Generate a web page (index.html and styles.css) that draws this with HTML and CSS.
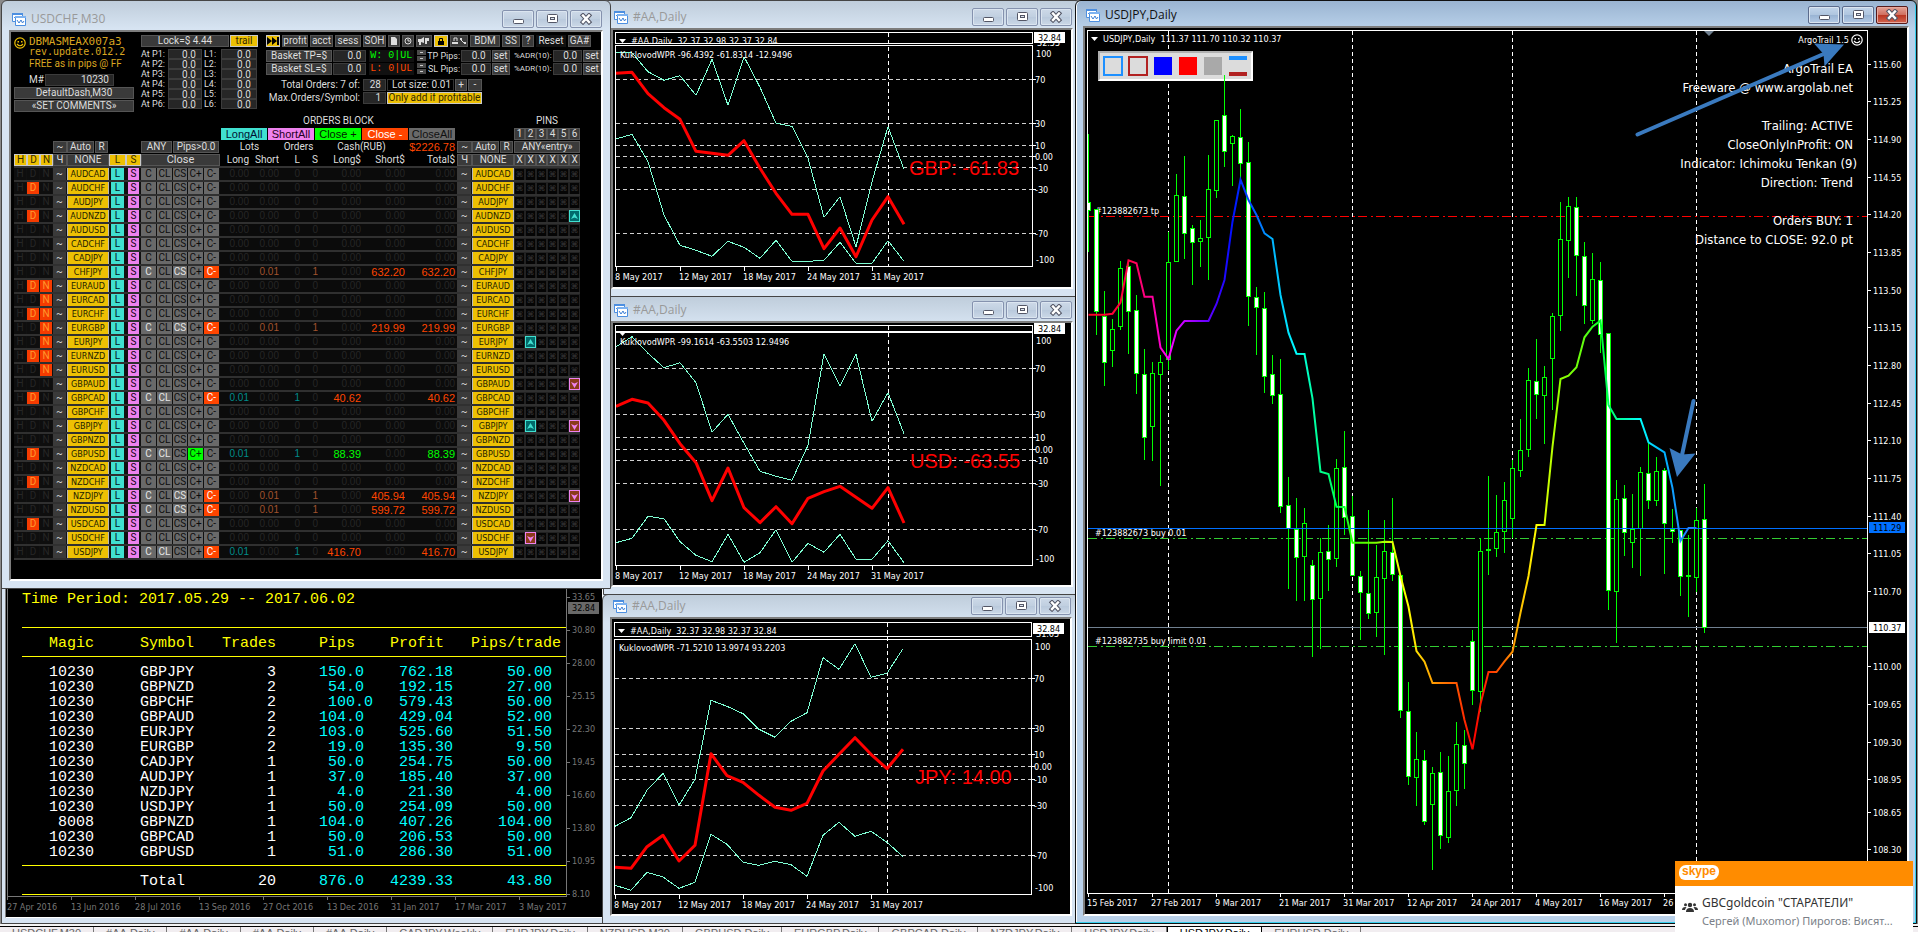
FILE: index.html
```html
<!DOCTYPE html>
<html lang="en">
<head>
<meta charset="utf-8">
<title>USDJPY,Daily</title>
<link rel="stylesheet" href="styles.css">
</head>
<body>
<svg class="defs" aria-hidden="true">
  <symbol id="chart-icon" viewBox="0 0 14 14">
    <path d="M.5 1.5h10v8h-10z" fill="#fff" stroke="#4d8fe0"/>
    <path d="M0 1h11v2H0z" fill="#4d8fe0"/>
    <path d="M2 6l2-2 1 2 2-2" fill="none" stroke="#4d8fe0"/>
    <path d="M3.5 4.500h10v9h-10z" fill="#fff" stroke="#4d8fe0"/>
    <path d="M3 4h11v2H3z" fill="#7db2f0"/>
    <path d="M5 8l2 3 2-3 1.500 3 1.500-2" fill="none" stroke="#3c7fd6"/>
  </symbol>
  <symbol id="min-icon" viewBox="0 0 14 12"><rect x="2.500" y="6.500" width="10" height="4" rx="1" fill="#fff" stroke="#535666"/></symbol>
  <symbol id="max-icon" viewBox="0 0 14 12"><rect x="2.500" y="1.500" width="10" height="8" rx="1" fill="#fff" stroke="#535666"/><rect x="5.500" y="4.500" width="4" height="2" fill="#dfe6f0" stroke="#535666"/></symbol>
  <symbol id="close-icon" viewBox="0 0 14 12"><path d="M4 2.500l6 6.500M10 2.500L4 9" stroke="#535666" stroke-width="4.500" stroke-linecap="square"/><path d="M4 2.500l6 6.500M10 2.500L4 9" stroke="#fff" stroke-width="2.400" stroke-linecap="square"/></symbol>
  <symbol id="smile-icon" viewBox="0 0 12 12"><circle cx="6" cy="6" r="5.200" fill="none" stroke="currentColor" stroke-width="1.200"/><path d="M3.500 4h1.500v1.500H3.500zM7 4h1.500v1.500H7z" fill="currentColor"/><path d="M3 7q3 3.500 6 0" fill="none" stroke="currentColor" stroke-width="1.200"/></symbol>
</svg>

<main class="desktop">

  <section class="window report-window" aria-label="Trade report">
    <div class="client report">
      <div class="report-plot">
        <p class="report-title">Time Period: 2017.05.29 -- 2017.06.02</p>
        <table class="report-table">
          <colgroup><col class="r1"><col class="r2"><col class="r3"><col class="r4"><col class="r5"><col class="r6"></colgroup>
          <thead><tr><th>Magic</th><th>Symbol</th><th>Trades</th><th>Pips</th><th>Profit</th><th>Pips/trade</th></tr></thead>
          <tbody id="report-rows"></tbody>
          <tfoot><tr><td></td><td>Total</td><td>20</td><td>876.0</td><td>4239.33</td><td>43.80</td></tr></tfoot>
        </table>
      </div>
      <div class="report-axis" id="report-axis"></div>
      <div class="report-dates" id="report-dates"></div>
    </div>
  </section>

  <section class="window jpy-window" aria-label="#AA,Daily JPY">
    <header class="titlebar"></header>
    <div class="client"><svg id="chart-jpy"></svg></div>
  </section>

  <section class="window usd-window" aria-label="#AA,Daily USD">
    <header class="titlebar"></header>
    <div class="client"><svg id="chart-usd"></svg></div>
  </section>

  <section class="window gbp-window" aria-label="#AA,Daily GBP">
    <header class="titlebar"></header>
    <div class="client"><svg id="chart-gbp"></svg></div>
  </section>

  <section class="window dash-window" aria-label="USDCHF,M30">
    <header class="titlebar"></header>
    <div class="client dash">
      <div class="dash-top">
        <div class="ident">
          <div class="ident-name">
            <svg class="smile"><use href="#smile-icon"/></svg>
            <div><p class="name-line">DBMASMEAX007a3</p><p class="rev-line">rev.update.012.2</p><p class="free-line">FREE as in pips @ FF</p></div>
          </div>
          <div class="magic"><label for="magic">M#</label><input id="magic" value="10230"></div>
          <button class="btn wide">DefaultDash,M30</button>
          <button class="btn wide">«SET COMMENTS»</button>
        </div>
        <div class="locks">
          <div class="lock-head"><button class="btn lock-btn">Lock=$ 4.44</button><button class="btn gold trail">trail</button></div>
          <div class="lock-grid" id="locks"></div>
        </div>
        <div class="tools">
          <div class="tool-row">
            <button class="btn gold w14" aria-label="Next"><svg width="12" height="8"><path d="M0 0l5 4-5 4zM5 0l5 4-5 4zM10 0h2v8h-2z" fill="#000"/></svg></button>
            <button class="btn w26">profit</button><button class="btn w23">acct</button><button class="btn w26">sess</button><button class="btn w23">SOH</button>
            <button class="btn w12" aria-label="Page"><svg width="6" height="8"><path d="M0 0h4l2 2v6H0z" fill="#ddd"/></svg></button>
            <button class="btn w12" aria-label="Clock"><svg width="8" height="8"><circle cx="4" cy="4" r="3" fill="none" stroke="#ddd"/><path d="M4 2v2h2" fill="none" stroke="#ddd"/></svg></button>
            <button class="btn w16" aria-label="Sound"><svg width="12" height="8"><path d="M0 2h3l3-2v6L3 5v3H1V5H0zM7 1h4v3H9v3H7z" fill="#ddd"/></svg></button>
            <button class="btn gold w14" aria-label="Lock"><svg width="8" height="8"><path d="M2.500 4V1.500h3V4" fill="none" stroke="#000"/><path d="M1 4h6v4H1z"/></svg></button>
            <button class="btn w18" aria-label="Lock percent"><svg width="14" height="8"><path d="M2 4V1h3v3" fill="none" stroke="#ddd"/><path d="M0 5h6v2H0zM8 1h2v2H8zM12 5h2v2h-2z" fill="#ddd"/><path d="M8 2l5 5" stroke="#ddd"/></svg></button>
            <button class="btn w30">BDM</button><button class="btn w18">SS</button><button class="btn w12">?</button><button class="btn reset w30">Reset</button><button class="btn w23">GA#</button>
          </div>
          <div class="basket-row">
            <button class="btn basket">Basket TP=$</button><input class="w34" aria-label="Basket TP" value="0.0"><span class="counter win">W: 0|UL</span><span class="spin"><button aria-label="Up"></button><button aria-label="Down"></button></span>
            <label class="pips" for="tp">TP Pips:</label><input class="w30" id="tp" value="0.0"><button class="btn set">set</button>
            <label class="adr" for="tpadr">%ADR(10):</label><input class="w30" id="tpadr" value="0.0"><button class="btn set">set</button>
          </div>
          <div class="basket-row">
            <button class="btn basket">Basket SL=$</button><input class="w34" aria-label="Basket SL" value="0.0"><span class="counter loss">L: 0|UL</span><span class="spin"><button aria-label="Up"></button><button aria-label="Down"></button></span>
            <label class="pips" for="sl">SL Pips:</label><input class="w30" id="sl" value="0.0"><button class="btn set">set</button>
            <label class="adr" for="sladr">%ADR(10):</label><input class="w30" id="sladr" value="0.0"><button class="btn set">set</button>
          </div>
          <div class="order-row first">
            <label for="total">Total Orders: 7 of:</label><input class="w23" id="total" value="28"><span class="lot">Lot size: 0.01</span><button class="btn w12">+</button><button class="btn w14">-</button>
          </div>
          <div class="order-row">
            <label for="maxo">Max.Orders/Symbol:</label><input class="w23" id="maxo" value="1"><button class="btn gold only">Only add if profitable</button>
          </div>
        </div>
      </div>
      <div class="block-titles"><span class="orders-title">ORDERS BLOCK</span><span>PINS</span></div>
      <table class="dash-table">
        <colgroup id="dash-cols"></colgroup>
        <thead>
          <tr>
            <td colspan="12"></td>
            <td colspan="7"><div class="close-row"><button class="btn teal">LongAll</button><button class="btn pink">ShortAll</button><button class="btn green">Close +</button><button class="btn red">Close -</button><button class="btn grey">CloseAll</button></div></td>
            <td colspan="2"></td>
            <td><button class="btn">1</button></td><td><button class="btn">2</button></td><td><button class="btn">3</button></td><td><button class="btn">4</button></td><td><button class="btn">5</button></td><td><button class="btn">6</button></td>
          </tr>
          <tr>
            <td colspan="3"></td><td><button class="btn">~</button></td>
            <td><div class="pairhead"><button class="btn">Auto</button><button class="btn r">R</button></div></td>
            <td colspan="2"></td>
            <td colspan="5"><div class="anyrow"><button class="btn any">ANY</button><button class="btn pipsgt">Pips&gt;0.0</button></div></td>
            <th colspan="2" class="mid">Lots</th><th colspan="2" class="mid">Orders</th><th colspan="2" class="mid">Cash(RUB)</th><td class="sum">$2226.78</td>
            <td><button class="btn">~</button></td>
            <td><div class="pairhead"><button class="btn">Auto</button><button class="btn r">R</button></div></td>
            <td colspan="6"><button class="btn">ANY«entry»</button></td>
          </tr>
          <tr>
            <td><button class="btn gold">H</button></td><td><button class="btn gold">D</button></td><td><button class="btn gold">N</button></td>
            <td><button class="btn">Ч</button></td><td><button class="btn">NONE</button></td>
            <td><button class="btn gold">L</button></td><td><button class="btn gold">S</button></td>
            <td colspan="5"><button class="btn closebtn">Close</button></td>
            <th>Long</th><th>Short</th><th>L</th><th>S</th><th>Long$</th><th>Short$</th><th class="last">Total$</th>
            <td><button class="btn">Ч</button></td><td><button class="btn">NONE</button></td>
            <td><button class="btn">X</button></td><td><button class="btn">X</button></td><td><button class="btn">X</button></td><td><button class="btn">X</button></td><td><button class="btn">X</button></td><td><button class="btn">X</button></td>
          </tr>
        </thead>
        <tbody id="dash-rows"></tbody>
      </table>
    </div>
  </section>

  <section class="window main-window" aria-label="USDJPY,Daily">
    <header class="titlebar active"></header>
    <div class="client main-client">
      <div class="palette">
        <button class="sw outline-blue" aria-label="Blue frame"></button><button class="sw outline-red" aria-label="Red frame"></button><button class="sw blue" aria-label="Blue"></button><button class="sw redfill" aria-label="Red"></button><button class="sw greyfill" aria-label="Grey"></button><button class="sw bars" aria-label="Lines"></button>
      </div>
      <svg id="chart-main"></svg>
    </div>
  </section>
</main>

<nav class="tabs">
  <button>USDCHF,M30</button><button>#AA,Daily</button><button>#AA,Daily</button><button>#AA,Daily</button><button>#AA,Daily</button><button>CADJPY,Weekly</button><button>EURJPY,Daily</button><button>NZDUSD,M30</button><button>GBPUSD,Daily</button><button>EURGBP,Daily</button><button>GBPCAD,Daily</button><button>NZDJPY,Daily</button><button>USDJPY,Daily</button><button class="current">USDJPY,Daily</button><button>EURUSD,Daily</button>
</nav>

<aside class="toast">
  <div class="toast-head">
    <span class="skype">skype</span>
  </div>
  <div class="toast-body">
    <svg width="16" height="10" viewBox="0 0 16 10" fill="#333"><circle cx="8" cy="3" r="2.200"/><circle cx="3.500" cy="2.800" r="1.500"/><circle cx="12.500" cy="2.800" r="1.500"/><path d="M4 10q0-4 4-4t4 4zM0 8q0-3 3.500-3l1 .5Q3 6.500 3 8zM16 8q0-3-3.500-3l-1 .5q1.500 1 1.500 2.500z"/></svg>
    <div><p class="chat">GBCgoldcoin "СТАРАТЕЛИ"</p><p class="msg">Сергей (Muxomor) Пирогов: Висят...</p></div>
  </div>
</aside>
<script src="app.js"></script>
</body>
</html>
```

FILE: styles.css
```css
* { box-sizing: border-box; }
body {
  margin: 0;
  height: 100vh;
  overflow: hidden;
  display: flex;
  flex-direction: column;
  background: #8a8a8a;
  font-family: "DejaVu Sans Condensed", "Noto Sans", sans-serif;
  font-size: 9px;
}
p { margin: 0; }
button, input { font: inherit; color: inherit; margin: 0; padding: 0; border: 0; border-radius: 0; min-width: 0; }
.defs { position: absolute; width: 0; height: 0; }
.desktop { position: relative; flex: 1; overflow: hidden; border-bottom: 2px solid #f4f4f4; }

/* windows */
.window {
  position: absolute;
  display: flex;
  flex-direction: column;
  padding: 0 7px 7px;
  border: 1px solid #454545;
  border-radius: 6px 6px 0 0;
  background: linear-gradient(#bfcddb, #d7e4f2 28px);
}
.dash-window { left: 1px; top: 0; width: 610px; height: 589px; }
.gbp-window { left: 603px; top: 0; width: 478px; height: 297px; }
.usd-window { left: 603px; top: 296px; width: 478px; height: 299px; }
.jpy-window { left: 602px; top: 594px; width: 478px; height: 330px; }
.report-window { left: 1px; top: 560px; width: 610px; height: 364px; padding: 0 7px 5px 3px; }
.main-window {
  left: 1075px; top: 0; right: 1px; height: 924px;
  border-color: #111;
  background: linear-gradient(#9ab4d1, #b9d1ea 28px);
  box-shadow: inset -1px -1px #35d0ee, inset 1px 0 #fff;
}
.titlebar {
  display: flex;
  align-items: flex-end;
  gap: 2px;
  padding: 0 1px 2px 3px;
  font-family: "Open Sans", "Noto Sans", sans-serif;
  font-size: 12px;
  line-height: 18px;
  color: #999;
}
.titlebar.active { color: #111; }
.dash-window .titlebar { height: 29px; }
.gbp-window .titlebar { height: 27px; }
.usd-window .titlebar { height: 24px; }
.jpy-window .titlebar { height: 22px; }
.main-window .titlebar { height: 25px; }
.titlebar .icon { width: 14px; height: 14px; margin: 0 3px 2px 0; }
.titlebar .caption { flex: 1; }
.titlebar button {
  width: 32px; height: 18px;
  display: flex; align-items: center; justify-content: center;
  border: 1px solid #8592ae;
  border-radius: 2px;
  background: linear-gradient(#cdd9e8, #c0cfe0 50%, #b9c9dc 50%, #cbd8e7);
  box-shadow: inset 0 0 0 1px #dbe5f0;
}
.titlebar.active button { border-color: #5b6b8c; background: linear-gradient(#c3d5ea, #aec5df 50%, #98b3d3 50%, #b4cbe6); }
.titlebar.active button.close { border-color: #571a1a; background: linear-gradient(#e3a397, #cf6e5e 50%, #b93521 50%, #d2644f); box-shadow: inset 0 0 0 1px #e8a99d; }
.titlebar button svg { width: 14px; height: 12px; }
.client {
  flex: 1;
  min-height: 0;
  overflow: hidden;
  background: #000;
  border: 2px solid;
  border-color: #7d7d7d #fff #fff #7d7d7d;
}
.client > svg { display: block; position: relative; pointer-events: none; }
svg text { fill: #fff; }
.ln { shape-rendering: crispEdges; fill: none; }
.big { font-family: "Liberation Sans", Arial, sans-serif; font-size: 20px; }
.small { font-size: 9px; }
.info { font-size: 13px; text-anchor: end; }
svg text.big { fill: #f00; }
svg text.dark { fill: #000; }

/* report */
.report {
  display: grid;
  grid-template-columns: minmax(0, 1fr) 35px;
  grid-template-rows: minmax(0, 1fr) 20px;
  border-width: 1px;
}
.report-plot { border: 1px solid #777; border-top: 0; padding: 30px 0 0 14px; margin-left: 1px; }
.report-title, .report-table { font-family: "Liberation Mono", "Courier New", monospace; font-size: 15px; line-height: 15px; color: #ff0; }
.report-title { margin-bottom: 20px; }
.report-table { width: 100%; table-layout: fixed; border-collapse: collapse; text-align: right; }
.report-table th { font-weight: normal; padding: 8px 0 5px; border-top: 1px solid #ff0; border-bottom: 1px solid #ff0; }
.report-table td { padding: 0; color: #0ff; }
.report-table tbody tr:first-child td { padding-top: 8px; }
.report-table tbody tr:last-child td { padding-bottom: 5px; }
.report-table tfoot td { padding: 8px 0 5px; border-top: 1px solid #ff0; border-bottom: 1px solid #ff0; }
.report-table td:nth-child(-n+3) { color: #fff; }
.report-table tr > :nth-child(2) { text-align: left; padding-left: 46px; }
.report-table td:nth-child(4) { padding-right: 9px; }
.report-table td.over { padding-right: 0; }
.report-table th:nth-child(4) { padding-right: 18px; }
.report-table th:nth-child(5) { padding-right: 9px; }
.report-table th:nth-child(6) { padding-right: 5px; }
.report-table td:nth-child(6) { padding-right: 14px; }
.r1 { width: 72px; } .r2 { width: 99px; } .r3 { width: 83px; } .r4 { width: 97px; } .r5 { width: 80px; }
.report-axis { position: relative; display: flex; flex-direction: column; padding-top: 19px; color: #777; }
.report-axis span { height: 33px; line-height: 33px; flex: none; padding-left: 5px; background: linear-gradient(#777, #777) 0 16px / 3px 1px no-repeat; }
.report-axis b { position: absolute; left: 1px; top: 40px; width: 31px; height: 12px; padding-left: 4px; line-height: 12px; font-weight: normal; background: #696969; color: #000; }
.report-dates { grid-column: 1 / 3; display: grid; grid-template-columns: repeat(9, 64px); line-height: 20px; color: #777; white-space: nowrap; padding-left: 1px; }
.report-dates span { background: linear-gradient(#777, #777) 0 0 / 1px 3px no-repeat; }

/* dashboard */
.dash { color: #ddd; padding: 3px 0 0 3px; }
.dash button, .dash input, .dash label, .dash p, .dash-table { font-family: Roboto, "Liberation Sans", sans-serif; font-size: 10px; }
.dash-top { display: flex; height: 80px; }
.btn {
  display: flex; align-items: center; justify-content: center;
  height: 12px; line-height: 12px;
  background: #3a3a3a; color: #ddd;
  border: 1px solid #555;
  white-space: nowrap; overflow: hidden;
  flex: none;
}
.dash input { height: 12px; background: #262626; color: #ddd; border: 1px solid #3c3c3c; text-align: right; padding-right: 4px; }
.gold { background: #edc003; color: #332800; border-color: #c9c9c9; }
.w12 { width: 12px; } .w14 { width: 14px; } .w16 { width: 16px; } .w18 { width: 18px; } .w23 { width: 23px; } .w26 { width: 26px; } .w30 { width: 30px; } .w34 { width: 34px; }
.ident { width: 120px; margin-right: 7px; display: flex; flex-direction: column; gap: 1px; }
.ident-name { display: flex; gap: 3px; color: #d9a520; height: 38px; }
.smile { width: 12px; height: 12px; color: #edc003; margin-top: 2px; flex: none; }
.dash .name-line { font-family: "DejaVu Sans Mono", monospace; font-size: 11px; line-height: 14px; height: 11px; }
.dash .rev-line { font-family: "DejaVu Sans Mono", monospace; font-size: 10px; line-height: 12px; height: 12px; }
.free-line { line-height: 12px; }
.magic { display: flex; gap: 1px; justify-content: flex-end; padding-right: 20px; line-height: 12px; }
.magic input { width: 69px; }
.wide { width: 120px; }
.locks { width: 117px; margin-right: 8px; }
.lock-head { display: flex; gap: 1px; margin-bottom: 2px; }
.lock-btn { width: 88px; } .trail { width: 28px; }
.lock-grid { display: grid; grid-template-columns: 25px 34px 15px 36px; column-gap: 2px; grid-auto-rows: 10px; line-height: 11px; white-space: nowrap; }
.dash .lock-grid input { height: 10px; line-height: 10px; width: 100%; padding-right: 5px; }
.dash .lock-grid label { font-size: 9px; line-height: 11px; }
.tools { flex: 1; overflow: hidden; }
.tool-row { display: flex; gap: 2px; margin-bottom: 3px; }
.reset { background: #111; border-color: #111; }
.basket-row { display: flex; gap: 1px; margin-bottom: 1px; line-height: 12px; white-space: nowrap; }
.basket { width: 66px; }
.counter { width: 46px; margin: 0 2px; padding-left: 1px; font: 10px/12px "Liberation Mono", monospace; background: #111; overflow: hidden; }
.counter.win { color: #0f0; } .counter.loss { color: #ff4500; }
.spin { width: 9px; display: flex; flex-direction: column; gap: 1px; }
.dash .spin button { height: 5px; border: 1px solid #555; background: #ccc; border-width: 2px 3px; border-color: #4a4a4a; }
.pips { width: 34px; text-align: right; }
.dash .pips { font-size: 9px; }
.dash .adr { font-size: 8px; }
.adr { width: 42px; text-align: right; }
.set { width: 18px; }
.order-row { display: flex; gap: 1px; margin-bottom: 1px; line-height: 12px; white-space: nowrap; }
.order-row.first { margin-top: 4px; }
.order-row label { width: 94px; text-align: right; margin-right: 2px; }
.lot { width: 67px; padding-left: 4px; border: 1px solid #333; font: 10px/10px Roboto, sans-serif; }
.only { width: 95px; }
.block-titles { display: flex; justify-content: space-between; padding: 0 43px 0 289px; font: 10px/12px Roboto, sans-serif; }
.dash-table { width: 566px; table-layout: fixed; border-collapse: collapse; line-height: 12px; }
.dash-table td, .dash-table th { padding: 0; height: 13px; font-weight: normal; white-space: nowrap; overflow: hidden; }
.dash-table .btn { width: 100%; }
.dash-table thead tr:last-child > * { border-bottom: 2px solid #333; height: 14px; }
.dash-table th { text-align: right; }
.dash-table th.mid { text-align: center; }
.dash-table th.last { padding-right: 2px; }
.dash-table td.sum { color: #ff4500; text-align: right; padding-right: 2px; font: 11px/12px "Liberation Sans", sans-serif; }
.close-row { display: flex; gap: 1px; padding-left: 1px; }
.dash .close-row .btn { width: 46px; font: 11px/12px "Liberation Sans", Arial, sans-serif; border: 0; }
.btn.teal { background: #40e0d0; color: #013; } .btn.pink { background: #ee82ee; color: #202; }
.btn.green { background: #0f0; color: #020; } .btn.red { background: #ff4500; color: #fff; } .btn.grey { background: #696969; color: #111; }
.pairhead, .anyrow { display: flex; gap: 1px; }
.dash-table .pairhead .btn { width: 27px; } .dash-table .pairhead .r { width: 13px; }
.dash-table .anyrow .any { width: 31px; } .dash-table .anyrow .pipsgt { width: 46px; }
.dash .closebtn { font-size: 11px; }
.dash-table tbody td { height: 14px; border-bottom: 2px solid #303030; background: #0b0b0b; text-align: right; color: #262626; font: 10px/12px "Liberation Sans", Arial, sans-serif; }
.dash-table tbody .btn { border-width: 0 1px 0 0; border-color: #111; }
.dash-table tbody .flag { background: #0e0e0e; color: #262626; }
.dash-table tbody .flag.on { background: #f53b00; color: #ff9a2e; }
.dash-table tbody .tilde { background: #3a3a3a; }
.dash-table tbody .pair { background: #edc003; color: #221c00; border-width: 0 1px; border-color: #b9b9b9; font-family: "DejaVu Sans Condensed", sans-serif; font-size: 9px; }
.dash-table tbody .close { background: #696969; color: #0c0c0c; }
.dash-table tbody .close.lit { color: #e6e6e6; }
.dash-table tbody .close.minus { background: #ff4500; color: #fff; }
.dash-table tbody .close.plus { background: #0f0; color: #030; }
.dash-table tbody .ls { border-width: 0 2px; }
.dash-table tbody .teal { background: #40e0d0; color: #012; } .dash-table tbody .pink { background: #ee82ee; color: #101; }
.dash-table tbody td.t-long { color: #008b8b; } .dash-table tbody td.t-short { color: #a0522d; }
.dash-table tbody td.money { padding-right: 2px; }
.dash-table tbody td.neg { color: #ff4500; font-size: 11px; } .dash-table tbody td.pos { color: #0f0; font-size: 11px; }
.dash .dash-table tbody .pin { background: #050505; color: #383838; border: 1px solid #222; border-bottom: 0; font: 8px/11px "DejaVu Sans", sans-serif; }
.dash .dash-table tbody .pin.up { background: #006b6b; border: 1px solid #40e0d0; color: #40e0d0; }
.dash .dash-table tbody .pin.down { background: #8b3a1a; border: 1px solid #ee82ee; color: #ee82ee; }

/* palette over the main chart */
.main-client { position: relative; }
.palette {
  position: absolute; left: 13px; top: 23px;
  display: flex; gap: 5px; padding: 3px;
  background: #dcdcdc;
  border: 2px solid; border-color: #b0b0b0 #fff #fff #b0b0b0;
}
.sw { width: 20px; height: 20px; background: none; border: 1px solid #dcdcdc; }
.sw.outline-blue { border: 2px solid #1e90ff; } .sw.outline-red { border: 2px solid #b22222; }
.sw.blue { background: #00f; } .sw.redfill { background: #f00; } .sw.greyfill { background: #a9a9a9; }
.sw.bars { border-width: 0 1px; background: linear-gradient(#1e90ff 4px, #dcdcdc 4px 16px, #b22222 16px); }

/* bottom tabs */
.tabs { display: flex; height: 6px; overflow: hidden; background: #f1edf0; border-top: 1px solid #000; }
.tabs button { height: 12px; padding: 0 12px; border-right: 1px solid #777; background: none; color: #666; font: 11px/12px "Liberation Sans", Arial, sans-serif; flex: none; }
.tabs .current { background: #fff; color: #000; border-left: 1px solid #000; border-right: 1px solid #000; }

/* notification */
.toast { position: absolute; right: 5px; bottom: 0; width: 238px; background: #fff; font-family: "Noto Sans", sans-serif; }
.toast-head { height: 25px; padding: 4px; background: #ff8c00; }
.skype { display: inline-block; padding: 0 3px; border-radius: 7px 6px 8px 6px; background: #fff; color: #ff8c00; font: bold 12px/13px "Liberation Sans", Arial, sans-serif; height: 15px; }
.toast-body { display: flex; align-items: flex-start; gap: 4px; height: 46px; padding: 8px 7px 0; color: #333; }
.toast-body svg { margin-top: 8px; flex: none; }
.chat { font-size: 12px; line-height: 18px; }
.msg { font-size: 11px; line-height: 18px; color: #7b7f88; white-space: nowrap; }
```

FILE: app.js
```js
const $ = id => document.getElementById(id);

/* title bars */
document.querySelectorAll('.titlebar').forEach(bar => {
  const name = bar.parentNode.getAttribute('aria-label').split(' ')[0];
  bar.innerHTML = `<svg class="icon"><use href="#chart-icon"/></svg><span class="caption">${name}</span>` +
    ['min', 'max', 'close'].map(k => `<button class="${k}" aria-label="${k}"><svg><use href="#${k}-icon"/></svg></button>`).join('');
});

/* report */
const report = `10230 GBPJPY 3 150.0 762.18 50.00
10230 GBPNZD 2 54.0 192.15 27.00
10230 GBPCHF 2 100.0 579.43 50.00
10230 GBPAUD 2 104.0 429.04 52.00
10230 EURJPY 2 103.0 525.60 51.50
10230 EURGBP 2 19.0 135.30 9.50
10230 CADJPY 1 50.0 254.75 50.00
10230 AUDJPY 1 37.0 185.40 37.00
10230 NZDJPY 1 4.0 21.30 4.00
10230 USDJPY 1 50.0 254.09 50.00
8008 GBPNZD 1 104.0 407.26 104.00
10230 GBPCAD 1 50.0 206.53 50.00
10230 GBPUSD 1 51.0 286.30 51.00`;
$('report-rows').innerHTML = report.split('\n').map(r => '<tr>' + r.split(' ').map(c => `<td${c === '100.0' ? ' class="over"' : ''}>${c}</td>`).join('') + '</tr>').join('');
$('report-axis').innerHTML = ['33.65', '30.80', '28.00', '25.15', '22.30', '19.45', '16.60', '13.80', '10.95', '8.10'].map(v => `<span>${v}</span>`).join('') + '<b>32.84</b>';
$('report-dates').innerHTML = ['27 Apr 2016', '13 Jun 2016', '28 Jul 2016', '13 Sep 2016', '27 Oct 2016', '13 Dec 2016', '31 Jan 2017', '17 Mar 2017', '3 May 2017'].map(v => `<span>${v}</span>`).join('');

/* dashboard */
$('locks').innerHTML = [1, 2, 3, 4, 5, 6].map(n =>
  `<label for="p${n}">At P${n}:</label><input id="p${n}" value="0.0"><label for="l${n}">L${n}:</label><input id="l${n}" value="0.0">`).join('');
$('dash-cols').innerHTML = [13, 13, 13, 14, 42, 17, 15, 16, 16, 15, 16, 16, 29, 30, 21, 18, 43, 44, 52, 15, 42, 11, 11, 11, 11, 11, 11]
  .map(w => `<col style="width:${w}px">`).join('');
const pairs = 'AUDCAD AUDCHF AUDJPY AUDNZD AUDUSD CADCHF CADJPY CHFJPY EURAUD EURCAD EURCHF EURGBP EURJPY EURNZD EURUSD GBPAUD GBPCAD GBPCHF GBPJPY GBPNZD GBPUSD NZDCAD NZDCHF NZDJPY NZDUSD USDCAD USDCHF USDJPY'.split(' ');
const flags = { AUDCHF: 'D', AUDNZD: 'D', EURAUD: 'DN', EURCAD: 'N', EURCHF: 'DN', EURGBP: 'N', EURJPY: 'N', EURNZD: 'DN', EURUSD: 'N', GBPCAD: 'D', GBPUSD: 'D', NZDCHF: 'D', USDCAD: 'D' };
const orders = { CHFJPY: ['S', '632.20'], EURGBP: ['S', '219.99'], GBPCAD: ['L', '40.62'], GBPUSD: ['L', '88.39', 1], NZDJPY: ['S', '405.94'], NZDUSD: ['S', '599.72'], USDJPY: ['L', '416.70'] };
const pins = { AUDNZD: { 6: 'up' }, EURJPY: { 2: 'up' }, GBPAUD: { 6: 'down' }, GBPJPY: { 2: 'up', 6: 'down' }, NZDJPY: { 6: 'down' }, USDCHF: { 2: 'down' } };
const pinGlyph = {
  up: '<svg width="7" height="7"><path d="M3.500 0L7 6 3.500 4.500 0 6z" fill="currentColor"/></svg>',
  down: '<svg width="7" height="7"><path d="M3.500 7L7 1 3.500 2.500 0 1z" fill="currentColor"/></svg>'
};
$('dash-rows').innerHTML = pairs.map(p => {
  const b = (cls, t) => `<td><button class="btn ${cls}">${t}</button></td>`;
  const t = (cls, v) => `<td class="${cls}">${v}</td>`;
  const [side, sum, win] = orders[p] || [];
  const L = side === 'L', S = side === 'S', tone = win ? 'pos' : 'neg';
  let h = [...'HDN'].map(f => b('flag' + ((flags[p] || '').includes(f) ? ' on' : ''), f)).join('');
  h += b('tilde', '~') + b('pair', p) + b('ls teal', 'L') + b('ls pink', 'S');
  h += b('close' + (side ? ' lit' : ''), 'C') + b('close' + (L ? ' lit' : ''), 'CL') + b('close' + (S ? ' lit' : ''), 'CS');
  h += b('close' + (win ? ' plus' : ''), 'C+') + b('close' + (side && !win ? ' minus' : ''), 'C-');
  h += t(L ? 't-long' : '', L ? '0.01' : '0.00') + t(S ? 't-short' : '', S ? '0.01' : '0.00');
  h += t(L ? 't-long' : '', L ? 1 : 0) + t(S ? 't-short' : '', S ? 1 : 0);
  h += t(L ? tone : '', L ? sum : '0.00') + t(S ? tone : '', S ? sum : '0.00') + t('money ' + (side ? tone : ''), side ? sum : '0.00');
  h += b('tilde', '~') + b('pair', p);
  for (let n = 1; n <= 6; n++) { const s = (pins[p] || {})[n]; h += b('pin ' + (s || ''), s ? pinGlyph[s] : '⌘'); }
  return `<tr>${h}</tr>`;
}).join('');

/* svg helpers */
const text = (x, y, s, cls = 'small', extra = '') => `<text x="${x}" y="${y}" class="${cls}" ${extra} xml:space="preserve">${s}</text>`;
const line = (x1, y1, x2, y2, c = '#fff', extra = '') => `<line class="ln" x1="${x1}" y1="${y1}" x2="${x2}" y2="${y2}" stroke="${c}" ${extra}/>`;
const box = (x, y, w, h) => `<rect class="ln" x="${x}" y="${y}" width="${w}" height="${h}" stroke="#fff"/>`;
const fit = (el, x, y, w, h) => { el.setAttribute('viewBox', `${x} ${y} ${w} ${h}`); el.setAttribute('width', w); el.setAttribute('height', h); };

/* indicator charts: series are stored in thirds of a pixel from the top of the chart */
function indicator(id, o) {
  const Y = v => o.top + v / 3, x0 = o.x;
  const series = (a, c, w) => `<polyline fill="none" stroke="${c}" stroke-width="${w}" stroke-linejoin="round" ${w === 1 ? 'shape-rendering="crispEdges"' : ''} points="${a.map((v, i) => (x0 + 16 * i) + ',' + Y(v).toFixed(1)).join(' ')}"/>`;
  const [a, b, c, d] = o.boxes.map(v => Math.round(Y(v)) + 0.5);
  let h = `<clipPath id="${id}-clip"><rect x="${x0}" y="${a}" width="417" height="${b - a}"/></clipPath>`;
  o.levels.forEach((v, i) => {
    const y = Math.floor(Y(v)) + 0.5;
    h += line(x0, y, x0 + 416, y, '#d0d0d0', 'stroke-dasharray="4 3"') + line(x0 + 416, y, x0 + 420, y);
    h += text(x0 + 419, y + 3.5, ['70', '30', '10', '0.00', '-10', '-30', '-70'][i]);
  });
  h += text(x0 + 420, Y(o.ends[0]) + 4, '100') + text(x0 + 420, Y(o.ends[1]) + 4, '-100');
  h += line(x0 + 272.5, a, x0 + 272.5, d, '#fff', 'stroke-dasharray="4 3"');
  h += series(o.upper, '#7fffd4', 1) + series(o.lower, '#7fffd4', 1) + series(o.red, '#f00', 3);
  h += box(x0 - 0.5, a, 417, b - a) + box(x0 - 0.5, c, 417, d - c);
  if (o.head) h += `<g clip-path="url(#${id}-clip)">` + text(x0 + 15, o.head, '#AA,Daily  32.37 32.98 32.37 32.84') + '</g>';
  h += `<path d="M${x0 + 3} ${o.tri}h7l-3.500 4z" fill="#fff"/>`;
  h += text(x0 + 4, o.wprY, 'KuklovodWPR ' + o.wpr);
  h += text(o.labelX, o.labelY, o.label, 'big');
  if (o.under) h += text(x0 + 421, o.tag + 14, o.under);
  h += `<rect x="${x0 + 418}" y="${o.tag}" width="31" height="11" fill="#fff"/>` + text(x0 + 422, o.tag + 9, '32.84', 'small dark');
  ['8 May 2017', '12 May 2017', '18 May 2017', '24 May 2017', '31 May 2017'].forEach((s, i) => {
    h += line(x0 + 64 * i + 0.5, d, x0 + 64 * i + 0.5, d + 4) + text(x0 + 64 * i - 1, d + 13, s);
  });
  $(id).innerHTML = h;
  fit($(id), ...o.view);
}
indicator('chart-gbp', {
  view: [613, 30, 458, 257], x: 616, top: 0, boxes: [97, 130, 136, 799], levels: [238, 370, 436, 469, 502, 568, 700], ends: [158, 778],
  upper: [157, 158, 215, 241, 227, 286, 178, 316, 170, 262, 370, 379, 475, 652, 590, 740, 545, 380, 508],
  lower: [417, 403, 485, 645, 736, 751, 769, 724, 742, 775, 721, 784, 784, 781, 727, 790, 790, 722, 784],
  red: [220, 217, 281, 323, 358, 454, 460, 466, 422, 505, 580, 643, 643, 746, 684, 770, 660, 590, 673],
  head: 44, tri: 39, wprY: 58, wpr: '-96.4392 -61.8314 -12.9496', label: 'GBP: -61.83', labelX: 909, labelY: 175, tag: 32, under: '32.55'
});
indicator('chart-usd', {
  view: [613, 323, 458, 262], x: 616, top: 290, boxes: [106, 122, 127, 824], levels: [235, 373, 442, 478, 511, 580, 718], ends: [149, 803],
  upper: [170, 140, 190, 233, 218, 278, 427, 373, 460, 544, 559, 571, 466, 191, 287, 193, 394, 308, 431],
  lower: [758, 745, 679, 686, 755, 796, 815, 733, 817, 788, 719, 817, 760, 787, 733, 808, 808, 752, 818],
  red: [349, 328, 339, 391, 461, 518, 632, 534, 653, 698, 650, 701, 625, 605, 589, 622, 655, 593, 699],
  head: 0, tri: 332, wprY: 345, wpr: '-99.1614 -63.5503 12.9496', label: 'USD: -63.55', labelX: 910, labelY: 468, tag: 323
});
indicator('chart-jpy', {
  view: [612, 618, 458, 296], x: 615, top: 590, boxes: [94, 136, 143, 910], levels: [262, 412, 490, 526, 565, 643, 793], ends: [164, 889],
  upper: [706, 680, 598, 547, 643, 565, 328, 346, 368, 415, 439, 391, 365, 200, 235, 158, 259, 247, 173],
  lower: [883, 898, 844, 858, 892, 874, 730, 760, 814, 823, 811, 821, 856, 733, 694, 736, 721, 754, 797],
  red: [829, 832, 767, 733, 810, 763, 488, 554, 574, 613, 649, 658, 637, 540, 490, 440, 490, 533, 475],
  head: 633, tri: 628, wprY: 650, wpr: '-71.5210 13.9974 93.2203', label: 'JPY: 14.00', labelX: 915, labelY: 783, tag: 622, under: '31.65'
});

/* main chart: high, body top, body bottom, low (thirds of a pixel), filled */
const candles = `402 607 632 756 1|628 628 935 1007 1|873 948 1088 1160 1|957 988 1052 1101 0|783 805 980 990 0|790 800 935 1064 1|885 931 1120 1182 1|1047 1123 1312 1380 1|1087 1120 1280 1385 0|1066 1087 1124 1460 0|696 787 1078 1110 0|522 586 785 785 0|468 589 700 777 1|675 685 727 855 1|660 714 724 801 0|465 568 713 840 0|360 361 572 594 0|225 346 455 501 1|405 409 431 558 0|327 412 491 540 1|426 487 890 978 1|861 892 923 1065 1|876 925 1130 1179 1|1065 1123 1187 1212 1|1077 1183 1520 1541 1|1431 1516 1585 1769 1|1494 1587 1673 1803 1|1524 1569 1670 1803 0|1680 1696 1798 1971 1|1615 1657 1796 1947 0|1575 1654 1678 1773 1|1377 1405 1675 1701 0|1293 1402 1553 1605 1|1488 1549 1727 1727 1|1713 1729 1778 1920 1|1530 1780 1841 1857 1|1635 1732 1838 1911 0|1560 1654 1736 1965 0|1494 1657 1724 1743 1|1724 1727 2132 2154 1|2046 2134 2330 2355 1|2196 2278 2333 2418 0|2250 2281 2465 2475 1|2301 2320 2414 2610 0|2256 2317 2507 2547 1|2268 2374 2513 2529 0|2166 2233 2372 2418 0|2190 2236 2291 2367 1|1890 1924 2072 2115 1|1614 1654 2075 2136 0|1428 1648 1651 1725 1|1485 1597 1646 1671 0|1446 1502 1594 1659 0|1380 1405 1556 1614 0|1257 1351 1412 1431 0|1104 1141 1349 1371 0|1017 1144 1184 1257 1|1098 1132 1187 1332 0|939 949 1076 1230 0|606 718 947 993 0|591 619 721 834 0|591 622 767 888 1|726 769 916 972 1|759 838 962 972 0|786 841 1004 1059 1|1000 1000 1772 1830 1|1440 1498 1774 1929 0|1455 1495 1597 1668 1|1482 1588 1627 1704 0|1401 1417 1586 1728 0|1325 1420 1502 1527 1|1373 1415 1500 1518 0|1404 1411 1570 1722 1|1527 1588 1594 1629 1|1590 1590 1730 1788 1|1605 1726 1729 1851 1|1524 1561 1732 1776 0|1452 1558 1882 1899 1`.split('|').map(s => s.split(' ').map(Number));
const tenkan = [944, 944, 944, 941, 908, 781, 790, 890, 890, 1043, 1077, 992, 963, 963, 963, 963, 912, 840, 665, 539, 600, 645, 700, 717, 885, 998, 1061, 1062, 1195, 1415, 1422, 1520, 1521, 1628, 1628, 1628, 1628, 1625, 1626, 1728, 1820, 1953, 1985, 2049, 2049, 2049, 2049, 2160, 2248, 2112, 2016, 2016, 1984, 1955, 1838, 1728, 1575, 1575, 1340, 1137, 1127, 1102, 1012, 980, 962, 1215, 1257, 1257, 1257, 1257, 1327, 1342, 1357, 1464, 1623, 1584, 1584];
const hues = [[0, '#ff0022'], [5, '#ff0040'], [8, '#ff00a0'], [10, '#ff00ff'], [13, '#a000ff'], [16, '#4000ff'], [18, '#0010ff'], [21, '#0060ff'], [23, '#00b4ff'], [26, '#00ffff'], [28, '#00ffa8'], [31, '#00ff60'], [33, '#30ff00'], [36, '#80ff00'], [38, '#e0ff00'], [40, '#ffff00'], [42, '#ffc000'], [44, '#ff8000'], [46, '#ff5500'], [48, '#ff0000'], [50, '#ff3000'], [52, '#ff6a00'], [54, '#ffc000'], [56, '#ffff00'], [59, '#90ff00'], [62, '#60ff10'], [64, '#00ff30'], [66, '#00ff90'], [69, '#00ffff'], [72, '#00b0ff'], [74, '#1e90ff'], [76, '#1e70ff']];
const X = i => 1088.5 + 8 * i, px = v => Math.floor(v / 3);
let m = `<linearGradient id="hue" gradientUnits="userSpaceOnUse" x1="${X(0)}" x2="${X(76)}" y1="0" y2="0">` + hues.map(([i, c]) => `<stop offset="${(i / 76).toFixed(4)}" stop-color="${c}"/>`).join('') + '</linearGradient>';
m += '<clipPath id="plot"><rect x="1088" y="31" width="779" height="862"/></clipPath>';
[33, 53, 76].forEach(i => m += line(X(i), 31, X(i), 893, '#fff', 'stroke-dasharray="4 3"'));
m += line(X(10), 31, X(10), 50, '#fff', 'stroke-dasharray="4 3"') + line(X(10), 84, X(10), 893, '#fff', 'stroke-dasharray="4 3"');
const dd = 'stroke-dasharray="9 4 2 3"';
m += line(1088, 216.5, 1867, 216.5, '#f00', dd) + line(1088, 538.5, 1867, 538.5, '#32cd32', dd) + line(1088, 646.5, 1867, 646.5, '#32cd32', dd);
m += text(1095, 214, '#123882673 tp') + text(1095, 536, '#123882673 buy 0.01') + text(1095, 644, '#123882735 buy limit 0.01');
m += line(1088, 627.5, 1867, 627.5, '#708090');
m += '<g clip-path="url(#plot)">';
candles.forEach(([hi, t, b, lo, f], i) => {
  m += line(X(i), px(hi), X(i), px(t), '#0f0') + line(X(i), px(b), X(i), px(lo), '#0f0');
  m += `<rect x="${X(i) - 2}" y="${px(t) + 0.5}" width="4" height="${Math.max(1, px(b) - px(t))}" fill="${f ? '#fff' : '#000'}" stroke="#0f0" shape-rendering="crispEdges"/>`;
});
m += '</g>';
m += line(1088, 528.5, 1867, 528.5, '#0070ff');
m += `<polyline fill="none" stroke="url(#hue)" stroke-width="2" points="${tenkan.map((v, i) => X(i) + ',' + (v / 3).toFixed(1)).join(' ')}"/>`;
m += box(1087.5, 30.5, 780, 863);
m += '<path d="M1704 31h10l-5 5z" fill="#708090"/><path d="M1091 37h7l-3.500 4z" fill="#fff"/>';
m += text(1103, 42, 'USDJPY,Daily  111.37 111.70 110.32 110.37');
m += text(1849, 43, 'ArgoTrail 1.5', 'small', 'text-anchor="end"') + '<svg x="1851" y="34" width="12" height="12" color="#fff"><use href="#smile-icon"/></svg>';
[[73, 'ArgoTrail EA'], [92, 'Freeware @ www.argolab.net'], [130, 'Trailing: ACTIVE'], [149, 'CloseOnlyInProfit: ON'], [168, 'Indicator: Ichimoku Tenkan (9)'], [187, 'Direction: Trend'], [225, 'Orders BUY: 1'], [244, 'Distance to CLOSE: 92.0 pt']]
  .forEach(([y, s]) => m += text(s.endsWith(')') ? 1857 : 1853, y, s, 'info'));
[[193, '115.60'], [304, '115.25'], [418, '114.90'], [532, '114.55'], [643, '114.20'], [757, '113.85'], [871, '113.50'], [982, '113.15'], [1096, '112.80'], [1210, '112.45'], [1321, '112.10'], [1435, '111.75'], [1549, '111.40'], [1660, '111.05'], [1774, '110.70'], [1999, '110.00'], [2113, '109.65'], [2227, '109.30'], [2338, '108.95'], [2437, '108.65'], [2548, '108.30']]
  .forEach(([y, s]) => m += line(1868, px(y) + 0.5, 1871, px(y) + 0.5) + text(1873, px(y) + 4, s));
m += '<rect x="1869" y="522" width="36" height="11" fill="#0070ff"/>' + text(1873, 531, '111.29', 'small dark');
m += '<rect x="1869" y="622" width="36" height="11" fill="#fff"/>' + text(1873, 631, '110.37', 'small dark');
['15 Feb 2017', '27 Feb 2017', '9 Mar 2017', '21 Mar 2017', '31 Mar 2017', '12 Apr 2017', '24 Apr 2017', '4 May 2017', '16 May 2017', '26 May 2017']
  .forEach((s, i) => m += line(1088.5 + 64 * i, 893, 1088.5 + 64 * i, 897) + text(1087 + 64 * i, 906, s));
m += '<g fill="#3a7abf" stroke="#3a7abf"><path d="M1637.500 134.500L1826 53" stroke-width="4" stroke-linecap="round"/><path d="M1814 43.500L1844 44.500 1824.500 66.500 1823.500 54z" stroke="none"/><path d="M1693.500 401L1682 455" stroke-width="4" stroke-linecap="round"/><path d="M1669.500 448L1682 454.500 1695.500 453.500 1677 477z" stroke="none"/></g>';
$('chart-main').innerHTML = m;
fit($('chart-main'), 1085, 28, 822, 886);
```
